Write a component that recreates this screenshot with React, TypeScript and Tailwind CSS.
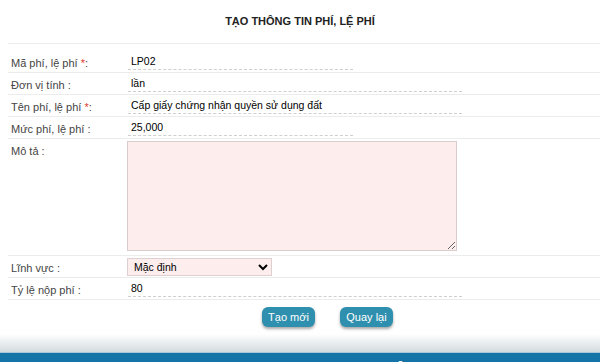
import React from 'react';

const font = { fontFamily: '"Liberation Sans", Arial, sans-serif' };

const Row = ({ label, required, children, className = 'h-[22px]' }: { label: string; required?: boolean; children: React.ReactNode; className?: string }) => (
  <div className={`flex items-start border-b border-[#ececec] ${className}`}>
    <div className="w-[120px] shrink-0 pl-[3px] pt-[6px] text-[11px] leading-[13px] text-[#444]">
      {label} {required && <span className="text-[#e53935]">*</span>}:
    </div>
    <div className="flex-1 pt-[2px]">{children}</div>
  </div>
);

const Field = ({ value, width }: { value: string; width: string }) => (
  <div className={`${width} h-[17px] border-b border-dashed border-[#cfcfcf] px-[3px] pt-[2px] text-[10.5px] leading-[13px] text-black`}>
    {value}
  </div>
);

const App: React.FC = () => {
  return (
    <div className="w-[600px] bg-white" style={font}>
      <div className="ml-[8px] flex h-[44px] items-center justify-center border-b border-[#ececec]">
        <h1 className="-ml-[8px] text-[11px] font-bold text-[#222]">TẠO THÔNG TIN PHÍ, LỆ PHÍ</h1>
      </div>
      <div className="ml-[8px] pt-[7px]">
        <Row label="Mã phí, lệ phí" required>
          <Field value="LP02" width="w-[225px]" />
        </Row>
        <Row label="Đơn vị tính">
          <Field value="lần" width="w-[334px]" />
        </Row>
        <Row label="Tên phí, lệ phí" required>
          <Field value="Cấp giấy chứng nhận quyền sử dụng đất" width="w-[334px]" />
        </Row>
        <Row label="Mức phí, lệ phí">
          <Field value="25,000" width="w-[225px]" />
        </Row>
        <Row label="Mô tả" className="h-[117px]">
          <textarea
            className="-ml-[1px] block h-[110px] w-[330px] border border-[#d8cccc] bg-[#fdeded] text-[11px] outline-none"
            defaultValue=""
          />
        </Row>
        <Row label="Lĩnh vực">
          <select
            className="-ml-[1px] block h-[18px] w-[145px] border border-[#dcd0d0] bg-[#fdeded] pl-[2px] text-[10.5px] leading-[14px] text-black outline-none"
            defaultValue="0"
          >
            <option value="0">Mặc định</option>
          </select>
        </Row>
        <Row label="Tỷ lệ nộp phí">
          <Field value="80" width="w-[334px]" />
        </Row>
      </div>
      <div className="flex gap-[25px] pl-[262px] pt-[7px]">
        <button className="h-[20px] w-[53px] rounded-[6px] bg-[#2f8fae] text-[11px] text-white shadow-[0_2px_3px_rgba(0,0,0,0.35)]">
          Tạo mới
        </button>
        <button className="h-[20px] w-[53px] rounded-[6px] bg-[#2f8fae] text-[11px] text-white shadow-[0_2px_3px_rgba(0,0,0,0.35)]">
          Quay lại
        </button>
      </div>
      <div className="mt-[7px] h-[18px] bg-gradient-to-b from-white to-[#d3dbdf]" />
      <div className="border-t border-[#a9c7d6] bg-[#1474a8] pb-[8px] pt-[6px] text-center text-[11px] font-bold text-white">
        © Cổng thông tin điện tử 2017 UNIT Đà Nẵng
      </div>
    </div>
  );
};

export default App;
